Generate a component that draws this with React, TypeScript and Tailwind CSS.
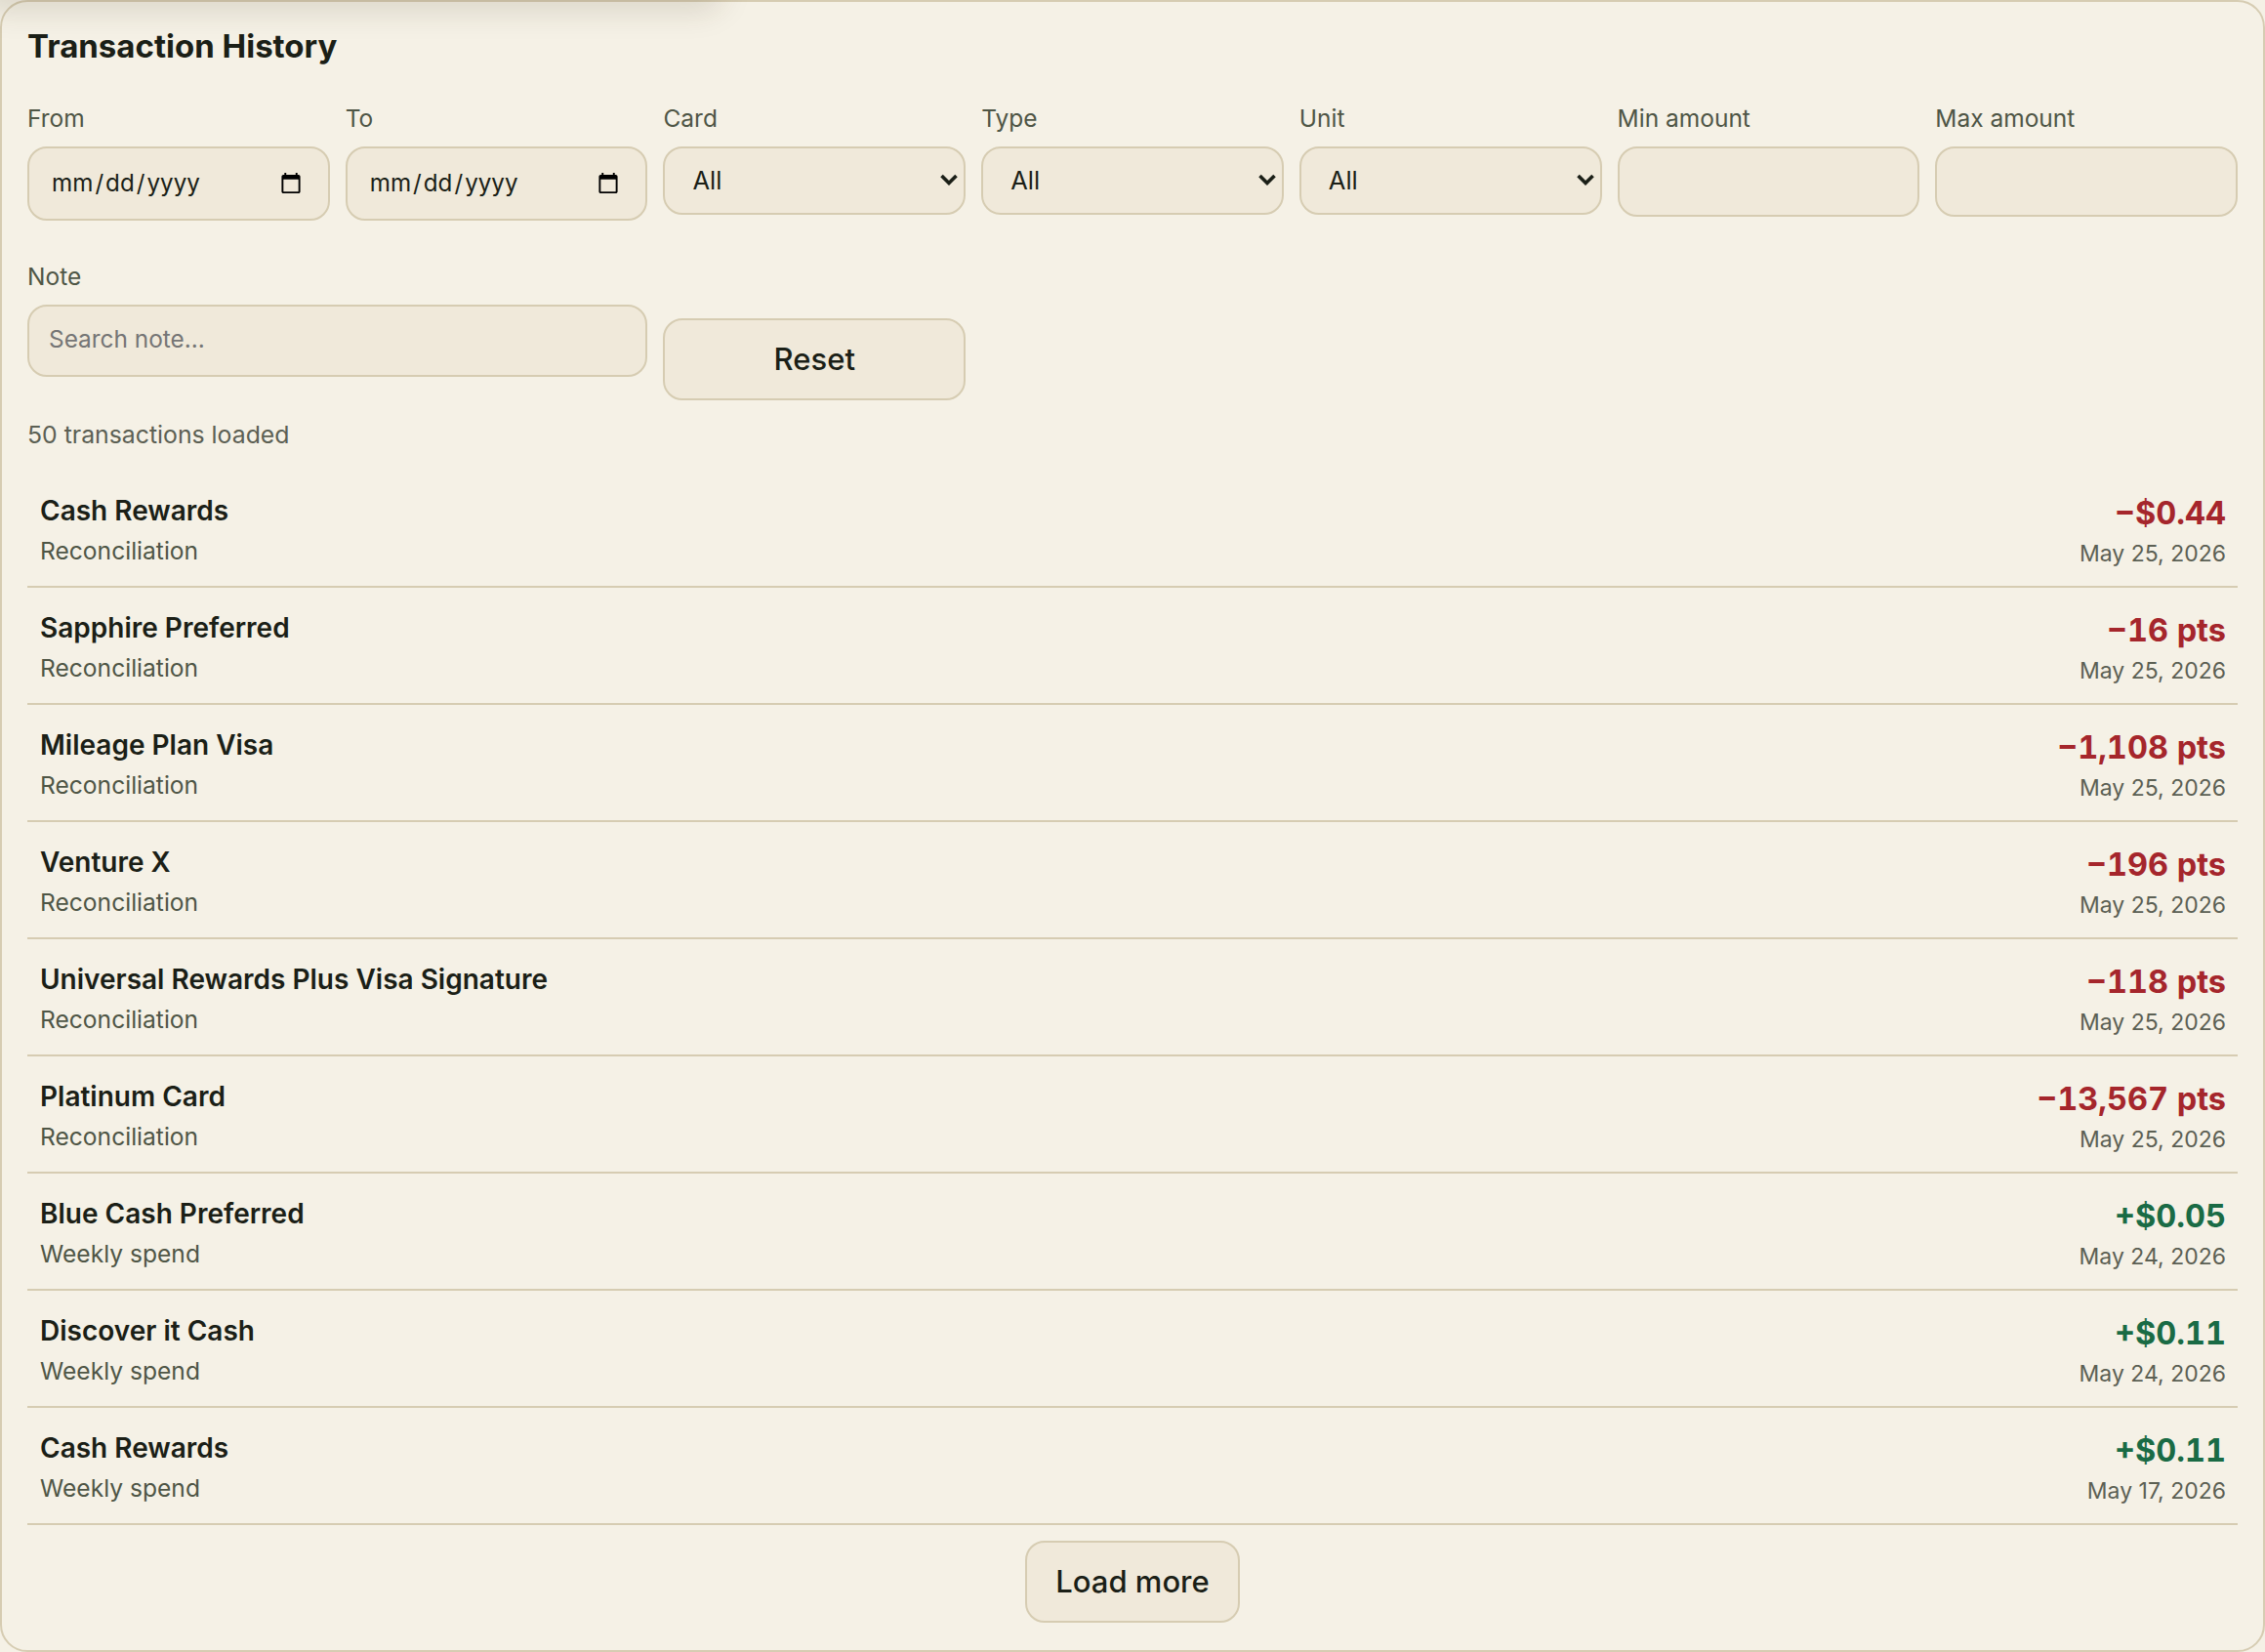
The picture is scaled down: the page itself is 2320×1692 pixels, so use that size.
import React from "react";

const rows = [
  ["Cash Rewards", "Reconciliation", "−$0.44", "May 25, 2026", false],
  ["Sapphire Preferred", "Reconciliation", "−16 pts", "May 25, 2026", false],
  ["Mileage Plan Visa", "Reconciliation", "−1,108 pts", "May 25, 2026", false],
  ["Venture X", "Reconciliation", "−196 pts", "May 25, 2026", false],
  ["Universal Rewards Plus Visa Signature", "Reconciliation", "−118 pts", "May 25, 2026", false],
  ["Platinum Card", "Reconciliation", "−13,567 pts", "May 25, 2026", false],
  ["Blue Cash Preferred", "Weekly spend", "+$0.05", "May 24, 2026", true],
  ["Discover it Cash", "Weekly spend", "+$0.11", "May 24, 2026", true],
  ["Cash Rewards", "Weekly spend", "+$0.11", "May 17, 2026", true],
] as const;

const field =
  "w-full rounded-[10px] border border-[#d6ccb2] bg-[#f0e9da] text-[#1b1f17] outline-none";

function Label({ children }: { children: React.ReactNode }) {
  return <label className="mb-[6.5px] block text-[12.25px] leading-[16px] text-[#4f5646]">{children}</label>;
}

function Sel({ label }: { label: string }) {
  return (
    <div>
      <Label>{label}</Label>
      <div className="relative">
        <select className={`${field} h-[35px] appearance-none pl-[14px] text-[12.75px]`}>
          <option>All</option>
        </select>
        <svg
          viewBox="0 0 18 12"
          className="pointer-events-none absolute top-[14px] right-[4px] h-[6px] w-[9px]"
          fill="none"
          stroke="#1b1f17"
          strokeWidth="3.6"
        >
          <path d="M1.5 2 L9 9.5 L16.5 2" />
        </svg>
      </div>
    </div>
  );
}

export default function App() {
  return (
    <div className="relative [zoom:2] min-h-[846px] bg-[#f5f1e6] font-['Inter','Noto_Sans',sans-serif]">
      <div className="h-[846px] overflow-hidden rounded-[14px] border border-[#d6ccb2] bg-[#f5f1e6] px-[13px] pt-[12px]">
        <h2 className="text-[16.5px] leading-[21px] font-bold text-[#1b1f17]">Transaction History</h2>
        <div className="mt-[18.5px] grid grid-cols-7 gap-x-2">
          <div>
            <Label>From</Label>
            <input type="date" className={`${field} h-[38px] pr-[11px] pl-[10.5px] text-[12.1px]`} />
          </div>
          <div>
            <Label>To</Label>
            <input type="date" className={`${field} h-[38px] pr-[11px] pl-[10.5px] text-[12.1px]`} />
          </div>
          <Sel label="Card" />
          <Sel label="Type" />
          <Sel label="Unit" />
          <div>
            <Label>Min amount</Label>
            <input type="number" className={`${field} h-[36px] px-2 text-[12.5px]`} />
          </div>
          <div>
            <Label>Max amount</Label>
            <input type="number" className={`${field} h-[36px] px-2 text-[12.5px]`} />
          </div>
        </div>
        <div className="mt-[20.5px] grid grid-cols-7 gap-x-2">
          <div className="col-span-2">
            <Label>Note</Label>
            <input
              placeholder="Search note..."
              className={`${field} h-[37px] px-[10px] pb-[2px] text-[12.2px] placeholder:text-[#757575]`}
            />
          </div>
          <div className="pt-[29.5px]">
            <button className="h-[42px] w-full rounded-[10px] border border-[#d6ccb2] bg-[#f0e9da] text-[15.5px] font-medium text-[#1b1f17]">
              Reset
            </button>
          </div>
        </div>
        <div className="mt-[9.5px] text-[12.4px] leading-[16px] text-[#5c6054]">50 transactions loaded</div>
        <div className="mt-[10.5px]">
          {rows.map(([name, sub, amt, date, pos], i) => (
            <div key={i} className="flex h-[60px] items-center justify-between border-b border-[#d6ccb2] pr-[6px] pl-[6.5px]">
              <div className="pt-[1px]">
                <div className="text-[14px] leading-[18px] font-semibold text-[#1b1f17]">{name}</div>
                <div className="mt-[3.5px] text-[12.3px] leading-[16px] text-[#4f5646]">{sub}</div>
              </div>
              <div className="pt-[3.5px] text-right">
                <div className={`text-[16.25px] leading-[19px] font-bold tabular-nums ${pos ? "text-[#1a6b45]" : "text-[#a5262c]"}`}>{amt}</div>
                <div className="mt-[3.5px] text-[11.5px] leading-[15px] text-[#5c6054]">{date}</div>
              </div>
            </div>
          ))}
        </div>
        <div className="mt-[8px] flex justify-center">
          <button className="h-[42px] rounded-[10px] border border-[#d6ccb2] bg-[#f0e9da] px-[14.5px] text-[15.5px] font-medium text-[#1b1f17]">
            Load more
          </button>
        </div>
      </div>
      <div className="pointer-events-none absolute top-[-20px] left-[-10px] h-[20px] w-[380px] rounded-[10px] shadow-[0_5px_16px_rgba(60,50,20,0.15)]" />
    </div>
  );
}
